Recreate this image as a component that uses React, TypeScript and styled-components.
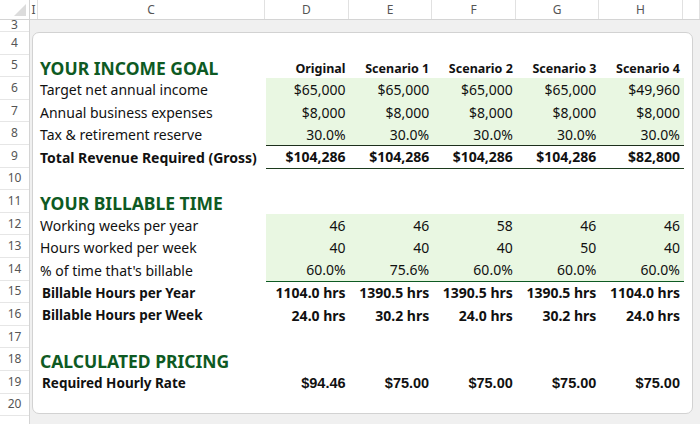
import React from "react";
import styled, { createGlobalStyle } from "styled-components";

const G = createGlobalStyle`
  html,body{margin:0;padding:0;background:#f0f0f0;overflow:hidden;}
  body{font-family:"Noto Sans","Open Sans",sans-serif;}
`;
const RH = 22.6;
const Page = styled.div`width:700px;height:424px;display:flex;flex-direction:column;background:#f0f0f0;`;
const HeadRow = styled.div`display:grid;grid-template-columns:30px 8px 227px 84px 83px 84px 83px 84px 17px;height:20px;background:#fff;border-bottom:1px solid #d4d4d4;box-sizing:border-box;`;
const Corner = styled.div`position:relative;border-right:1px solid #d4d4d4;&:after{content:"";position:absolute;right:3px;bottom:3px;border-left:12px solid transparent;border-bottom:12px solid #dcdcdc;}`;
const ColL = styled.div`font-size:12px;color:#555;display:flex;align-items:center;justify-content:center;border-right:1px solid #e1e1e1;font-family:"Noto Sans",sans-serif;`;
const Body = styled.div`display:flex;flex:1;overflow:hidden;`;
const Nums = styled.div`width:30px;background:#fff;border-right:1px solid #d4d4d4;box-sizing:border-box;display:flex;flex-direction:column;`;
const Num = styled.div<{ h: number; top?: boolean }>`height:${p => p.h}px;flex:none;font-size:12px;color:#555;display:flex;align-items:${p => p.top ? "flex-end" : "center"};justify-content:center;border-bottom:1px solid #e6e6e6;box-sizing:border-box;overflow:hidden;line-height:1;`;
const Sheet = styled.div`flex:1;padding:12px 7px 0 2px;`;
const Card = styled.div`background:#fff;border:1px solid #d2d2d2;border-radius:7px;height:382px;box-sizing:border-box;overflow:hidden;padding-left:7px;`;
const Row = styled.div`display:grid;grid-template-columns:226px repeat(5, 83.6px);height:${RH}px;align-items:stretch;`;
const Lab = styled.div<{ kind?: string }>`display:flex;align-items:center;white-space:nowrap;font-family:"Noto Sans",sans-serif;
  font-size:${p => p.kind === "h" ? "17.5px" : p.kind === "s" ? "13.5px" : "14px"};
  font-weight:${p => p.kind ? 700 : 400};
  color:${p => p.kind === "h" ? "#0e5a23" : "#111"};
  padding-left:${p => p.kind === "s" ? "2px" : "0"};`;
const Val = styled.div<{ green?: boolean; bold?: boolean; arial?: boolean; line?: string; head?: boolean }>`
  display:flex;align-items:center;justify-content:flex-end;padding-right:4px;white-space:nowrap;
  background:${p => p.green ? "#e9f7e2" : "transparent"};
  border-bottom:${p => p.line ? `1.5px solid ${p.line}` : "none"};
  font-family:${p => p.arial ? `"Liberation Sans",Arial,sans-serif` : `"Noto Sans",sans-serif`};
  font-size:${p => p.head ? "12.5px" : p.arial ? "14.5px" : "14px"};
  font-weight:${p => p.bold ? 700 : 400};color:#111;box-sizing:border-box;padding-top:${p => p.head ? "3px" : "0"};`;

type R = { label?: string; kind?: string; vals?: string[]; green?: boolean; bold?: boolean; arial?: boolean; line?: string; head?: boolean };
const rows: R[] = [
  {},
  { label: "YOUR INCOME GOAL", kind: "h", vals: ["Original", "Scenario 1", "Scenario 2", "Scenario 3", "Scenario 4"], bold: true, head: true, line: "#111" },
  { label: "Target net annual income", vals: ["$65,000", "$65,000", "$65,000", "$65,000", "$49,960"], green: true },
  { label: "Annual business expenses", vals: ["$8,000", "$8,000", "$8,000", "$8,000", "$8,000"], green: true },
  { label: "Tax & retirement reserve", vals: ["30.0%", "30.0%", "30.0%", "30.0%", "30.0%"], green: true, line: "#1c2e1c" },
  { label: "Total Revenue Required (Gross)", kind: "b", vals: ["$104,286", "$104,286", "$104,286", "$104,286", "$82,800"], bold: true, line: "#1c3a1c" },
  {},
  { label: "YOUR BILLABLE TIME", kind: "h" },
  { label: "Working weeks per year", vals: ["46", "46", "58", "46", "46"], green: true },
  { label: "Hours worked per week", vals: ["40", "40", "40", "50", "40"], green: true },
  { label: "% of time that's billable", vals: ["60.0%", "75.6%", "60.0%", "60.0%", "60.0%"], green: true, line: "#0e5a23" },
  { label: "Billable Hours per Year", kind: "s", vals: ["1104.0 hrs", "1390.5 hrs", "1390.5 hrs", "1390.5 hrs", "1104.0 hrs"], bold: true },
  { label: "Billable Hours per Week", kind: "s", vals: ["24.0 hrs", "30.2 hrs", "24.0 hrs", "30.2 hrs", "24.0 hrs"], bold: true },
  {},
  { label: "CALCULATED PRICING", kind: "h" },
  { label: "Required Hourly Rate", kind: "s", vals: ["$94.46", "$75.00", "$75.00", "$75.00", "$75.00"], bold: true, arial: true },
  {},
];

export default function App() {
  const nums = [3, ...Array.from({ length: 17 }, (_, i) => i + 4)];
  return (
    <Page>
      <G />
      <HeadRow>
        <Corner />
        {["I", "C", "D", "E", "F", "G", "H", ""].map((c, i) => <ColL key={i}>{c}</ColL>)}
      </HeadRow>
      <Body>
        <Nums>
          {nums.map(n => <Num key={n} h={n === 3 ? 12 : RH} top={n === 3}>{n}</Num>)}
        </Nums>
        <Sheet>
          <Card>
            {rows.map((r, i) => (
              <Row key={i}>
                <Lab kind={r.kind}>{r.label}</Lab>
                {(r.vals || ["", "", "", "", ""]).map((v, j) => (
                  <Val key={j} green={r.green} bold={r.bold} arial={r.arial} line={r.line} head={r.head}>{v}</Val>
                ))}
              </Row>
            ))}
          </Card>
        </Sheet>
      </Body>
    </Page>
  );
}
